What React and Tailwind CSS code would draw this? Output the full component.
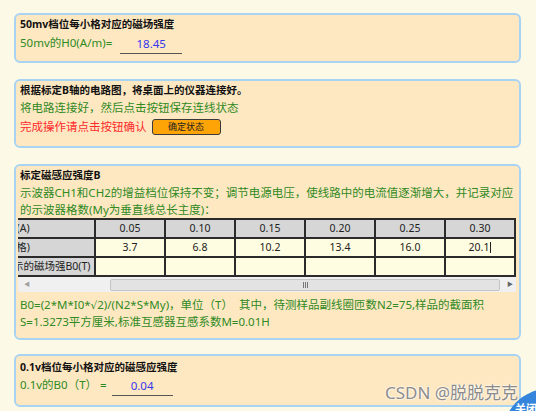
const heads = ["0.05", "0.10", "0.15", "0.20", "0.25", "0.30"];
const vals = ["3.7", "6.8", "10.2", "13.4", "16.0", "20.1"];

function Panel({ className, children }) {
  return (
    <div className={`rounded-[6px] border-2 border-[#a9d3f3] bg-[#fee8c2] px-[4px] ${className}`}>
      {children}
    </div>
  );
}

function Title({ children }) {
  return <div className="flex h-[16px] items-center text-[10.5px] font-bold text-[#111]">{children}</div>;
}

export default function App() {
  return (
    <div className="relative h-[411px] w-[536px] overflow-hidden bg-[#fdf9e7] pl-[14px] pr-[15px] pt-[13px] font-['Noto_Sans','Noto_Sans_CJK_SC',sans-serif]">
      {/* 50mv */}
      <Panel className="h-[50px] pt-[2px]">
        <Title>50mv档位每小格对应的磁场强度</Title>
        <div className="flex h-[20px] items-center text-[11.5px] text-[#2f8a22]">
          <span>50mv的H0(A/m)=</span>
          <span className="ml-[8px] -mb-[3px] w-[62px] border-b-[1.5px] border-[#555] pb-[1px] text-center leading-[16px] text-[#3636ee]">
            18.45
          </span>
        </div>
      </Panel>

      {/* connect */}
      <Panel className="mt-[16px] h-[69px] pt-[2px]">
        <Title>根据标定B轴的电路图，将桌面上的仪器连接好。</Title>
        <div className="flex h-[18px] items-center text-[11.5px] text-[#2f8a22]">将电路连接好，然后点击按钮保存连线状态</div>
        <div className="flex h-[20px] items-center text-[11.5px] text-[#ff2a2a]">
          <span>完成操作请点击按钮确认</span>
          <button className="ml-[5px] flex h-[16px] w-[69px] items-center justify-center rounded-[3px] border border-[#3a3a3a] bg-[#ffa406] text-[9px] text-[#222]">
            确定状态
          </button>
        </div>
      </Panel>

      {/* table */}
      <Panel className="mt-[16px] h-[176px] pt-[2px]">
        <Title>标定磁感应强度B</Title>
        <div className="text-[11.5px] leading-[17px] text-[#2f8a22]">
          示波器CH1和CH2的增益档位保持不变；调节电源电压，使线路中的电流值逐渐增大，并记录对应
          <br />
          的示波器格数(My为垂直线总长主度)：
        </div>
        <div className="-ml-[2px] w-[498px] overflow-hidden">
          <table className="-ml-[30px] table-fixed border-collapse text-[10.5px] text-[#222]">
            <colgroup>
              <col className="w-[106px]" />
              {heads.map((h) => (
                <col key={h} className="w-[70px]" />
              ))}
            </colgroup>
            <tbody>
              <tr className="h-[19px] bg-[#d6d6d6]">
                <td className="whitespace-nowrap border-2 border-[#2b2b2b] px-[2px]">电流I(A)</td>
                {heads.map((h) => (
                  <td key={h} className="border-2 border-[#2b2b2b] text-center">{h}</td>
                ))}
              </tr>
              <tr className="h-[19px] bg-[#fffde1]">
                <td className="whitespace-nowrap border-2 border-[#2b2b2b] bg-[#d6d6d6] px-[2px]">格数(格)</td>
                {vals.map((v, i) => (
                  <td key={v} className="border-2 border-[#2b2b2b] text-center">
                    {v}
                    {i === 5 && <span className="ml-[1px] inline-block h-[11px] w-[1px] bg-[#222] align-middle" />}
                  </td>
                ))}
              </tr>
              <tr className="h-[19px] bg-[#fffde1]">
                <td className="overflow-hidden whitespace-nowrap border-2 border-[#2b2b2b] bg-[#d6d6d6] px-[2px]">所表示的磁场强B0(T)</td>
                {vals.map((v) => (
                  <td key={v} className="border-2 border-[#2b2b2b]" />
                ))}
              </tr>
            </tbody>
          </table>
        </div>
        {/* horizontal scrollbar */}
        <div className="-ml-[2px] flex h-[15px] w-[498px] items-center bg-[#f0f0f0] text-[6px] text-[#a0a0a0]">
          <span className="ml-[6px] w-[7px]">◀</span>
          <div className="ml-[79px] flex h-[12px] w-[390px] items-center justify-center rounded-[2px] border border-[#c4c4c4] bg-[#e3e3e3]">
            <span className="flex gap-[1px]">
              <span className="h-[6px] w-[1px] bg-[#777]" />
              <span className="h-[6px] w-[1px] bg-[#777]" />
              <span className="h-[6px] w-[1px] bg-[#777]" />
            </span>
          </div>
          <span className="ml-[7px] w-[7px] text-[#666]">▶</span>
        </div>
        <div className="mt-[5px] text-[11.5px] leading-[15.5px] text-[#2f8a22]">
          B0=(2*M*I0*<span className="font-['DejaVu_Sans',sans-serif] text-[10.5px]">√</span>2)/(N2*S*My)，单位（T）&nbsp; 其中，待测样品副线圈匝数N2=75,样品的截面积
          <br />
          S=1.3273平方厘米,标准互感器互感系数M=0.01H
        </div>
      </Panel>

      {/* 0.1v */}
      <Panel className="mt-[14px] h-[53px] pt-[4px]">
        <Title>0.1v档位每小格对应的磁感应强度</Title>
        <div className="flex h-[18px] items-center text-[11.5px] text-[#2f8a22]">
          <span>0.1v的B0（T） =</span>
          <span className="ml-[5px] -mb-[3px] w-[61px] border-b-[1.5px] border-[#555] pb-[1px] text-center leading-[16px] text-[#3636ee]">
            0.04
          </span>
        </div>
      </Panel>

      {/* watermark */}
      <div className="absolute left-[385px] top-[383px] text-[17px] leading-[20px] text-[#8c8c8c] [text-shadow:0_0_2px_#fff,0_0_2px_#fff]">
        CSDN @脱脱克克
      </div>

      {/* corner button */}
      <div className="absolute left-[503px] top-[389px] flex h-[90px] w-[90px] justify-start rounded-full bg-[#3585dc] pl-[12px] pt-[12px] text-[11px] font-bold text-white">
        关闭
      </div>
    </div>
  );
}
